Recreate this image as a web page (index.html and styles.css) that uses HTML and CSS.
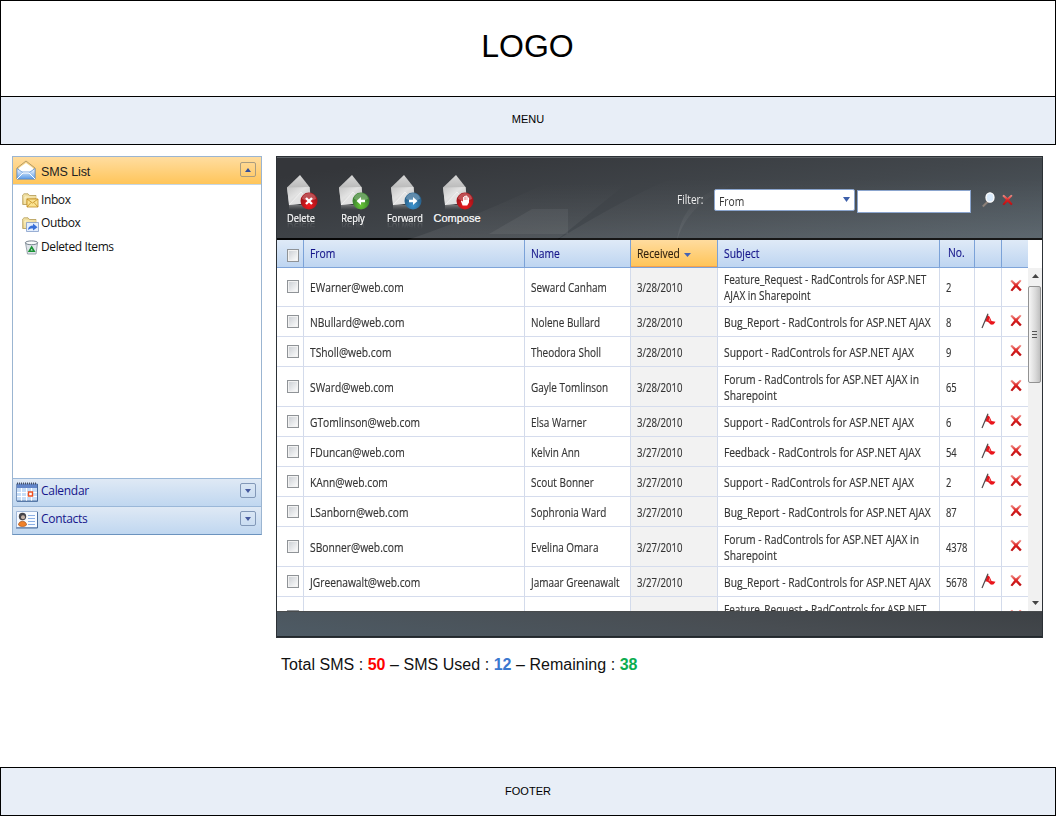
FILE: index.html
```html
<!DOCTYPE html>
<html lang="en">
<head>
<meta charset="utf-8">
<title>SMS List</title>
<link rel="stylesheet" href="styles.css">
</head>
<body>
<svg class="defs" width="0" height="0" aria-hidden="true">
  <defs>
    <linearGradient id="paper" x1="0" y1="0" x2="1" y2="1"><stop offset="0" stop-color="#c4c4c4"/><stop offset=".4" stop-color="#e2e2e2"/><stop offset="1" stop-color="#b5b5b5"/></linearGradient>
    <linearGradient id="flap" x1="0" y1="0" x2="0" y2="1"><stop offset="0" stop-color="#d6d6d6"/><stop offset="1" stop-color="#999"/></linearGradient>
    <linearGradient id="fade" x1="0" y1="0" x2="0" y2="1"><stop offset="0" stop-color="#aaa" stop-opacity=".5"/><stop offset="1" stop-color="#888" stop-opacity="0"/></linearGradient>
    <linearGradient id="blue" x1="0" y1="0" x2="0" y2="1"><stop offset="0" stop-color="#fff"/><stop offset="1" stop-color="#5a9ae6"/></linearGradient>
    <linearGradient id="folder" x1="0" y1="0" x2="1" y2="1"><stop offset="0" stop-color="#f7ebb5"/><stop offset="1" stop-color="#d3ad4c"/></linearGradient>
    <linearGradient id="red" x1="0" y1="0" x2="0" y2="1"><stop offset="0" stop-color="#f39a92"/><stop offset=".5" stop-color="#dc2020"/><stop offset="1" stop-color="#b80c10"/></linearGradient>
    <radialGradient id="ballred" cx=".5" cy=".75"><stop offset="0" stop-color="#f31b20"/><stop offset="1" stop-color="#a8141a"/></radialGradient>
    <radialGradient id="ballgreen" cx=".5" cy=".75"><stop offset="0" stop-color="#69c836"/><stop offset="1" stop-color="#3d8430"/></radialGradient>
    <radialGradient id="ballblue" cx=".5" cy=".75"><stop offset="0" stop-color="#3d94cf"/><stop offset="1" stop-color="#2b6590"/></radialGradient>
    <symbol id="envelope" viewBox="0 0 32 36">
      <path d="M2 30h18l-1 5H2z" fill="url(#fade)"/>
      <path d="M0 12.500 13 0l9.500 12L24 24 2 29z" fill="url(#flap)"/>
      <path d="M0 12.500 22.500 12 24 28 2 30z" fill="url(#paper)"/>
      <path d="M2 30 14 17l10 11z" fill="#e6e6e6" fill-opacity=".75"/>
      <path d="M2 30 14 17l3 3" fill="none" stroke="#fff" stroke-opacity=".7" stroke-width=".7"/>
    </symbol>
    <symbol id="cross" viewBox="0 0 12 13">
      <path d="M.3 2 2 .8l4 3.600L10 .8l1.500 1L7.700 6.200l4 4.600-1.700 1.500-4-4-3.800 4-1.700-1.100L4.300 6.300z" fill="url(#red)"/>
    </symbol>
    <symbol id="flag" viewBox="0 0 15 16">
      <path d="M6.500 2 8.500 3.500 10.500 8l4 .7-1.800 2.600c-2 .8-3.700.3-4.700-1.500C7 8.800 5.500 8.500 4 8.600z" fill="#e9151c"/>
      <path d="M8.300 4.500 9.600 8.500l-2-.5z" fill="#f58a84"/>
      <path d="M7 .7 1 15" stroke="#52494b" stroke-width="1.200"/>
    </symbol>
    <symbol id="foldericon" viewBox="0 0 17 15">
      <path d="M.7 11.500V2L2 .8h4l1.500 1.700H14v9z" fill="url(#folder)" stroke="#b29b55" stroke-width=".8"/>
      <path d="M3 11V4h12" fill="none" stroke="#fff6ce"/>
    </symbol>
  </defs>
</svg>

<header class="logo"><span>LOGO</span></header>
<nav class="band menu">MENU</nav>

<main class="main">
  <aside class="side">
    <div class="bar bar-active">
      <svg class="bar-icon" width="20" height="20" viewBox="0 0 20 20"><path d="M1 8 10 1l9 7v11H1z" fill="#f8d68b" stroke="#a38b5c" stroke-width=".8"/><path d="M3 8l7-5 7 5v6H3z" fill="#fff"/><path d="M1 8.500 6 12h8l5-3.500V19H1z" fill="url(#blue)" stroke="#5b90d4" stroke-width=".8"/><path d="M1 19l6-6h6l6 6" fill="none" stroke="#fff"/></svg>
      <span class="bar-title arial">SMS List</span>
      <i class="toggle up"></i>
    </div>
    <ul class="folders">
      <li><svg width="17" height="15"><use href="#foldericon"/><path d="M5 6h11v8H5z" fill="#fbe391" stroke="#c28c20" stroke-width=".8"/><path d="M5 6l5.500 4L16 6M5 14l4-4.500M16 14l-4-4.500" fill="none" stroke="#c28c20" stroke-width=".8"/></svg><span>Inbox</span></li>
      <li><svg width="17" height="15"><use href="#foldericon"/><path d="M4.500 5.500h12v9h-12z" fill="#e4eefc" stroke="#819cc9" stroke-width=".8"/><path d="M6 13c0-3 2-4.500 5-4.500V6.500l4.500 3.800L11 13.500v-2C8.500 11.400 7 12 6 13z" fill="#3970d8"/></svg><span>Outbox</span></li>
      <li><svg width="17" height="15"><path d="M3.500 3h12l-1.500 11H5.500z" fill="#dfe5ea" stroke="#87929c" stroke-width=".8"/><ellipse cx="9.500" cy="2.800" rx="6.200" ry="1.900" fill="#f8fafb" stroke="#75818d"/><path d="M9.700 7 7.200 11.300h5z" fill="none" stroke="#199434" stroke-width="1.600"/></svg><span>Deleted Items</span></li>
    </ul>
    <div class="bar">
      <svg class="bar-icon cal" width="22" height="20" viewBox="0 0 22 20"><path d="M.5 2h21v17H.5z" fill="#c6ddf7" stroke="#7793bb"/><path d="M1 2h20v4H1z" fill="#6386c9"/><path d="M1 1.500h20" stroke="#444e65" stroke-width="2" stroke-dasharray="1 1"/><path d="M5.500 6v13M10.500 6v13M15.500 6v13M1 10.500h20M1 14.500h20" stroke="#fff"/><path d="M12.500 10h4v4h-4z" fill="#fff" stroke="#ed5020" stroke-width="1.400"/><path d="M1 19.300h20.500V2" fill="none" stroke="#476a9d"/></svg>
      <span class="bar-title">Calendar</span><i class="toggle down"></i>
    </div>
    <div class="bar">
      <svg class="bar-icon card" width="22" height="18" viewBox="0 0 22 18"><path d="M.5.500h21v16H.5z" fill="#f7faff" stroke="#a0b7d8"/><path d="M21.500 1v16H0" fill="none" stroke="#496b9b"/><circle cx="6.500" cy="5.500" r="3.700" fill="#45444a"/><circle cx="7" cy="6.200" r="2" fill="#c3b0a5"/><path d="M2.500 14c0-5 8-5 8 0-2 2-6 2-8 0z" fill="#ef812b" stroke="#a55018" stroke-width=".7"/><path d="M12 4.500h7M12 7.500h7M12 10.500h7M12 13.500h7" stroke="#8bafe5"/></svg>
      <span class="bar-title">Contacts</span><i class="toggle down"></i>
    </div>
  </aside>

  <section class="content">
    <div class="panel">
      <div class="toolbar">
        <svg class="swoosh" width="765" height="82" viewBox="0 0 765 82"><defs><linearGradient id="sw" x1="0" y1="0" x2="0" y2="1"><stop offset="0" stop-color="#fff" stop-opacity="0"/><stop offset="1" stop-color="#fff" stop-opacity=".07"/></linearGradient></defs><path d="M130 82 Q190 62 270 25 L350 25 L280 82z" fill="url(#sw)"/><path d="M212 76l43-25h36v25z" fill="#fff" fill-opacity=".06"/><path d="M280 82 Q345 42 395 20 L480 20 Q415 35 400 82z" fill="url(#sw)"/><path d="M400 82C405 45 430 28 480 20H765v62z" fill="url(#sw)"/></svg>
        <div class="tools">
          <div class="tool"><svg width="32" height="36"><use href="#envelope"/><circle cx="22" cy="26" r="8.500" fill="url(#ballred)"/><path d="M15 24a7 6 0 0 1 14 0q-7 3-14 0z" fill="#fff" opacity=".25"/><path d="M19 23l6 6m0-6-6 6" stroke="#fff" stroke-width="2.400"/></svg><span>Delete</span></div>
          <div class="tool"><svg width="32" height="36"><use href="#envelope"/><circle cx="22" cy="26" r="8.500" fill="url(#ballgreen)"/><path d="M15 24a7 6 0 0 1 14 0q-7 3-14 0z" fill="#fff" opacity=".25"/><path d="M17.500 26l4.500-4v2.800h4v2.400h-4V30z" fill="#fff"/></svg><span>Reply</span></div>
          <div class="tool"><svg width="32" height="36"><use href="#envelope"/><circle cx="22" cy="26" r="8.500" fill="url(#ballblue)"/><path d="M15 24a7 6 0 0 1 14 0q-7 3-14 0z" fill="#fff" opacity=".25"/><path d="M26.500 26 22 22v2.800h-4v2.400h4V30z" fill="#fff"/></svg><span>Forward</span></div>
          <div class="tool wide"><svg width="32" height="36"><use href="#envelope"/><circle cx="22" cy="26" r="8.500" fill="url(#ballred)"/><path d="M15 24a7 6 0 0 1 14 0q-7 3-14 0z" fill="#fff" opacity=".25"/><path d="M19.600 30.500 17.800 26l1.200-.5 1 1.200V22h1.200v-1h1.300v-.6h1.300v1h1.200v1.200h1v5l-1.800 3z" fill="#fff"/><path d="M21.300 22v3M22.600 21.500V25M24 22v3" stroke="#d92328" stroke-width=".4"/></svg><span>Compose</span></div>
        </div>
        <div class="filter">
          <label class="filter-label">Filter:</label>
          <div class="combo"><span>From</span><svg width="7" height="5"><path d="M0 0h7L3.500 5z" fill="#3d5faa"/></svg></div>
          <div class="search-box"></div>
          <svg class="lens" width="13" height="16" viewBox="0 0 13 16"><path d="M6 9.500.800 14.500" stroke="#8d8179" stroke-width="2"/><ellipse cx="8" cy="5.500" rx="4" ry="4.700" fill="#d9eafb" stroke="#fff" stroke-width="1.300"/></svg>
          <svg class="clear" width="11" height="12"><use href="#cross"/></svg>
        </div>
      </div>
      <div class="grid-head">
        <div class="cell check"><i class="box"></i></div>
        <div class="cell"><span class="t">From</span></div>
        <div class="cell"><span class="t">Name</span></div>
        <div class="cell sorted"><span class="t">Received</span><svg class="sort" width="7" height="4"><path d="M0 0h7L3.500 4z" fill="#4463b4"/></svg></div>
        <div class="cell"><span class="t">Subject</span></div>
        <div class="cell number"><span class="t">No.</span></div>
        <div class="cell"></div>
        <div class="cell"></div>
      </div>
      <div class="grid-body">
        <div class="rows" id="rows"></div>
        <div class="scroll">
          <svg width="14" height="18"><path d="M4 10h7L7.500 6z" fill="#444"/></svg>
          <div class="thumb"><i></i></div>
          <svg class="scroll-down" width="14" height="15"><path d="M4 5h7L7.500 9z" fill="#444"/></svg>
        </div>
      </div>
      <div class="panel-foot"></div>
    </div>
    <p class="totals">Total SMS : <b class="c-red">50</b> – SMS Used : <b class="c-blue">12</b> – Remaining : <b class="c-green">38</b></p>
  </section>
</main>

<footer class="band footer">FOOTER</footer>
<script src="app.js"></script>
</body>
</html>
```

FILE: styles.css
```css
* { box-sizing: border-box; }
body {
  margin: 0;
  width: 1056px;
  height: 816px;
  display: flex;
  flex-direction: column;
  overflow: hidden;
  background: #fff;
  color: #000;
  font-family: "Liberation Sans", Arial, sans-serif;
}
.defs { position: absolute; }
svg { display: block; flex: none; }

.logo {
  height: 97px;
  flex: none;
  border: 1px solid #000;
  display: flex;
  justify-content: center;
  padding: 26px 1px 0 0;
  font-size: 32px;
  line-height: 38px;
}
.band {
  flex: none;
  background: #e8eef7;
  border: 1px solid #000;
  text-align: center;
  font-size: 11px;
  line-height: 13px;
}
.menu { height: 48px; border-top: 0; padding-top: 16px; }
.footer { height: 49px; padding-top: 17px; }

.main { flex: 1; display: flex; gap: 14px; padding: 11px 13px 0 12px; min-height: 0; }

.side {
  width: 250px;
  height: 379px;
  border: 1px solid #9bb5d1;
  border-bottom-color: #6b93be;
  display: flex;
  flex-direction: column;
  font-family: "Open Sans", sans-serif;
  font-size: 12px;
}
.bar {
  height: 28px;
  flex: none;
  display: flex;
  align-items: flex-start;
  padding: 3px 5px 0 3px;
  border-top: 1px solid #9ab7d8;
  background: linear-gradient(#dfe9f5, #c0d7f0);
  color: #16168b;
}
.bar-active {
  border-top: 0;
  border-bottom: 1px solid #c6d6e4;
  background: linear-gradient(#ffdda0, #ffc55a);
  color: #222;
}
.bar-title { margin-left: 3px; line-height: 17px; flex: 1; letter-spacing: -.3px; }
.arial { font-family: "Liberation Sans", Arial, sans-serif; line-height: 25px; margin-left: 5px; font-size: 12.500px; letter-spacing: -.1px; }
.card { margin-top: 1px; }
.toggle {
  width: 16px;
  height: 15px;
  margin-top: 1px;
  border: 1px solid #8298b8;
  border-radius: 2px;
  display: flex;
  align-items: center;
  justify-content: center;
}
.bar-active .toggle { border-color: #a99c80; margin-top: 2px; }
.toggle::before { content: ""; border: 3.500px solid transparent; }
.toggle.up::before { border-top: 0; border-bottom: 4px solid #344e9c; }
.toggle.down::before { border-bottom: 0; border-top: 4px solid #465a9f; }
.folders { list-style: none; margin: 0; padding: 4px 0 0 9px; flex: 1; }
.folders li { height: 23.500px; display: flex; align-items: center; gap: 2px; color: #111; letter-spacing: -.4px; }
.folders li span { line-height: 18px; margin-top: -2px; }

.content { width: 767px; }
.panel {
  height: 482px;
  border: 1px solid #2c3136;
  background: #fff;
  display: flex;
  flex-direction: column;
  font-family: "Open Sans", sans-serif;
  font-size: 12px;
}
.toolbar {
  height: 83px;
  flex: none;
  position: relative;
  display: flex;
  justify-content: space-between;
  border-top: 1px solid #5d6266;
  border-bottom: 2px solid #060606;
  background: linear-gradient(172deg, #34363a 10%, #42474c 55%, #525d65);
}
.swoosh { position: absolute; inset: 0; }
.tools { position: relative; display: flex; padding: 17px 0 0 10px; }
.tool { width: 52px; display: flex; flex-direction: column; color: #fff; }
.tool span {
  width: 100%;
  margin-left: -12px;
  text-align: center;
  font-size: 11px;
  line-height: 13px;
  -webkit-text-stroke: .2px #fff;
  transform: scaleX(.84);
  -webkit-box-reflect: below -3px linear-gradient(transparent 40%, rgba(255,255,255,.2));
}
.tool.wide span { font-family: "Liberation Sans", Arial, sans-serif; transform: none; margin-left: -12px; line-height: 15px; -webkit-box-reflect: unset; }
.filter { position: relative; width: 370px; display: flex; align-items: flex-start; padding-top: 31px; }
.filter-label { width: 43px; padding-left: 6px; color: #eee; line-height: 21px; transform: scaleX(.84); transform-origin: left; }
.combo {
  width: 141px;
  height: 22px;
  display: flex;
  align-items: center;
  justify-content: space-between;
  padding: 2px 4px 0;
  background: #fff;
  border: 1px solid #8ba5ce;
  border-radius: 2px;
  color: #333;
}
.combo svg { margin-top: -4px; }
.combo span { transform: scaleX(.86); transform-origin: left; }
.filter .combo { margin-left: -1px; }
.search-box { width: 114px; height: 23px; margin: 1px 0 0 2px; background: #fff; border: 1px solid #8ba5ce; }
.lens { margin: 3px 0 0 11px; }
.clear { margin: 5px 0 0 7px; }

.grid-head, .row {
  display: grid;
  grid-template-columns: 27px 221px 106px 87px 222px 35px 27px 26px;
  width: 751px;
}
.grid-head { height: 28px; flex: none; border-bottom: 1px solid #7fa4d9; background: linear-gradient(#dfeaf7, #bed5f1); color: #15158a; }
.cell { display: flex; align-items: center; padding-left: 6px; border-right: 1px solid #d3dbeb; }
.cell:last-child { border-right: 0; }
.grid-head .cell { border-right-color: #7ba2d8; }
.grid-head .sorted { background: linear-gradient(#ffdc9f, #ffc457); color: #30210f; box-shadow: inset 0 -1px #f2a14e; }
.check { padding-left: 10px; }
.grid-head .check { padding-top: 3px; }
.grid-head .number { padding: 0 0 2px 8px; }
.t { display: block; white-space: nowrap; line-height: 16px; transform: scaleX(.86); transform-origin: left; -webkit-text-stroke: .15px; }
.from .t { transform: scaleX(.855); }
.name .t { transform: scaleX(.83); }
.date .t { transform: scaleX(.8); }
.subject .t { transform: scaleX(.857); }
.tall .subject .t { transform: scaleX(.86); }
.tall .subject.long .t { transform: scaleX(.837); }
.no .t { transform: scaleX(.78); }
.sort { margin: 3px 0 0 -3px; }
.box { width: 12px; height: 13px; border: 1px solid #8f9397; background: linear-gradient(135deg, #c9cdd2, #fff); box-shadow: inset 0 0 0 1px #f2f2f2; }
.grid-body { height: 343px; flex: none; display: flex; overflow: hidden; }
.rows { width: 751px; margin-top: -1px; }
.row { height: 30px; border-bottom: 1px solid #d5dced; color: #333; }
.row .cell { padding-top: 2px; }
.row .check { padding-top: 0; }
.row.tall { height: 40px; }
.row .date { background: #f2f2f2; }
.row .icon { padding: 0 0 2px 8px; }
.row .flag { padding: 0 0 2px 6px; }
.scroll { width: 14px; background: #f1f1f1; display: flex; flex-direction: column; }
.thumb { width: 13px; height: 97px; border: 1px solid #929292; border-radius: 2px; background: linear-gradient(90deg, #f6f6f6, #d9d9d9 60%, #c0c0c0); display: flex; align-items: center; justify-content: center; }
.thumb i { width: 5px; height: 8px; background: repeating-linear-gradient(#555 0 1px, transparent 1px 3px); }
.scroll-down { margin-top: auto; }
.panel-foot { flex: 1; border-top: 1px solid #484b4d; border-bottom: 1px solid #22282c; background: linear-gradient(8deg, #4e5b65, #484d52 60%, #3d4145); }

.totals { margin: 18px 0 0 5px; font-size: 16px; line-height: 18px; white-space: nowrap; letter-spacing: .035px; color: #111; }
.c-red { color: #f00; }
.c-blue { color: #3a78cf; }
.c-green { color: #0cac50; }
```

FILE: app.js
```js
const messages = [
  ["EWarner@web.com", "Seward Canham", "3/28/2010", "Feature_Request - RadControls for ASP.NET<br>AJAX in Sharepoint", "2", 0],
  ["NBullard@web.com", "Nolene Bullard", "3/28/2010", "Bug_Report - RadControls for ASP.NET AJAX", "8", 1],
  ["TSholl@web.com", "Theodora Sholl", "3/28/2010", "Support - RadControls for ASP.NET AJAX", "9", 0],
  ["SWard@web.com", "Gayle Tomlinson", "3/28/2010", "Forum - RadControls for ASP.NET AJAX in<br>Sharepoint", "65", 0],
  ["GTomlinson@web.com", "Elsa Warner", "3/28/2010", "Support - RadControls for ASP.NET AJAX", "6", 1],
  ["FDuncan@web.com", "Kelvin Ann", "3/27/2010", "Feedback - RadControls for ASP.NET AJAX", "54", 1],
  ["KAnn@web.com", "Scout Bonner", "3/27/2010", "Support - RadControls for ASP.NET AJAX", "2", 1],
  ["LSanborn@web.com", "Sophronia Ward", "3/27/2010", "Bug_Report - RadControls for ASP.NET AJAX", "87", 0],
  ["SBonner@web.com", "Evelina Omara", "3/27/2010", "Forum - RadControls for ASP.NET AJAX in<br>Sharepoint", "4378", 0],
  ["JGreenawalt@web.com", "Jamaar Greenawalt", "3/27/2010", "Bug_Report - RadControls for ASP.NET AJAX", "5678", 1],
  ["", "", "", "Feature_Request - RadControls for ASP.NET<br>&nbsp;", "", 0]
];

const text = (value, kind) => `<div class="cell ${kind}"><span class="t">${value}</span></div>`;

document.getElementById("rows").innerHTML = messages.map(([from, name, date, subject, no, flagged]) => `
  <div class="row${subject.includes("<br>") ? " tall" : ""}">
    <div class="cell check"><i class="box"></i></div>
    ${text(from, "from")}${text(name, "name")}${text(date, "date")}${text(subject, subject.startsWith("Feature") ? "subject long" : "subject")}${text(no, "no")}
    <div class="cell flag">${flagged ? '<svg width="15" height="16"><use href="#flag"/></svg>' : ""}</div>
    <div class="cell icon"><svg width="12" height="13"><use href="#cross"/></svg></div>
  </div>`).join("");
```
